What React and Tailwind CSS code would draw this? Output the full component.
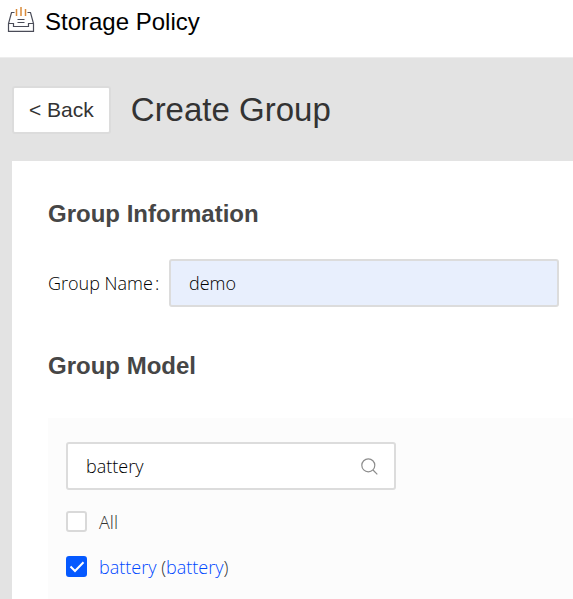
import { useState } from "react";

function StorageIcon() {
  return (
    <svg viewBox="0 0 28 26" className="h-[26px] w-7 shrink-0" fill="none" aria-hidden="true">
      <path d="M7.5 6.5H4.5L1.5 17.5V25.3H26.5V17.5L23.5 6.5H20.5" stroke="#4a4c58" strokeWidth="1.2" />
      <path d="M1.5 17.5H6.5V20.5H21.5V17.5H26.5" stroke="#4a4c58" strokeWidth="1.2" />
      <path d="M10.5 13.5H17.5M10.5 16.5H17.5" stroke="#4a4c58" strokeWidth="1.1" />
      <path d="M9.5 3V10M14 1V10M18.5 3V10" stroke="#d98a3a" strokeWidth="1.5" />
    </svg>
  );
}

function SearchIcon() {
  return (
    <svg viewBox="0 0 17 17" className="h-[17px] w-[17px] shrink-0" fill="none" stroke="#8c8c8c" strokeWidth="1.2" aria-hidden="true">
      <circle cx="7.3" cy="7.3" r="6.5" />
      <path d="M12 12L16.3 16.3" />
    </svg>
  );
}

function Option({ checked, onChange, children }) {
  return (
    <label className="flex h-[45px] items-center gap-3 text-[#333333]">
      <span className="grid h-[21px] w-[21px] shrink-0">
        <input
          type="checkbox"
          checked={checked}
          onChange={(e) => onChange(e.target.checked)}
          className="col-start-1 row-start-1 appearance-none rounded-[3px] border-2 border-[#d9d9d9] bg-white checked:border-[#0559ff] checked:bg-[#0559ff]"
        />
        {checked && (
          <svg viewBox="0 0 21 21" className="pointer-events-none col-start-1 row-start-1" fill="none" stroke="#ffffff" strokeWidth="2" aria-hidden="true">
            <path d="M4.5 10.5L9 15L17.5 6.2" />
          </svg>
        )}
      </span>
      <span>{children}</span>
    </label>
  );
}

export default function App() {
  const [name, setName] = useState("demo");
  const [query, setQuery] = useState("battery");
  const [all, setAll] = useState(false);
  const [battery, setBattery] = useState(true);

  return (
    <div className="flex min-h-screen flex-col bg-[#e3e3e3] font-['Liberation_Sans',Arial,sans-serif]">
      <header className="flex h-[58px] items-start gap-2.5 border-b border-[#ededed] bg-white px-[7px] pt-1.5 text-black">
        <StorageIcon />
        <span className="text-2xl">Storage Policy</span>
      </header>

      <main className="flex flex-1 flex-col pl-3">
        <div className="flex items-center gap-5 pt-7 pb-[27px] text-[#333333]">
          <button type="button" className="h-12 rounded-[3px] border-2 border-[#dcdcdc] bg-white px-[15px] text-[21px]">
            &lt; Back
          </button>
          <h1 className="text-[33px] leading-[42px]">Create Group</h1>
        </div>

        <section className="flex-1 bg-white pt-[37px] pl-9 text-[#464646]">
          <h2 className="text-2xl font-bold">Group Information</h2>
          <div className="mt-[29px] mr-3.5 flex items-center font-['Open_Sans','Noto_Sans',sans-serif] text-lg font-light">
            <label htmlFor="group-name" className="flex w-[121px] shrink-0 gap-0.5 text-black">
              <span>Group Name</span>
              <span>:</span>
            </label>
            <input
              id="group-name"
              value={name}
              onChange={(e) => setName(e.target.value)}
              className="h-12 min-w-0 flex-1 rounded-[3px] border-2 border-[#dcdcdc] bg-[#e8effd] px-[18px] font-[350] text-black"
            />
          </div>

          <h2 className="mt-[43px] text-2xl font-bold">Group Model</h2>
          <div className="mt-9 bg-[#fcfcfc] px-[18px] pt-6 pb-2.5 font-['Open_Sans','Noto_Sans',sans-serif] text-lg font-light">
            <div className="mb-[9px] flex h-12 max-w-[330px] items-center rounded-[3px] border-2 border-[#dcdcdc] bg-white pr-4 pl-[18px]">
              <input
                aria-label="Search models"
                value={query}
                onChange={(e) => setQuery(e.target.value)}
                className="min-w-0 flex-1 bg-transparent font-[350] text-black outline-none"
              />
              <SearchIcon />
            </div>
            <Option checked={all} onChange={setAll}>
              All
            </Option>
            <Option checked={battery} onChange={setBattery}>
              <span className="text-[#0048ff]">battery</span> (<span className="text-[#0048ff]">battery</span>)
            </Option>
          </div>
        </section>
      </main>
    </div>
  );
}
